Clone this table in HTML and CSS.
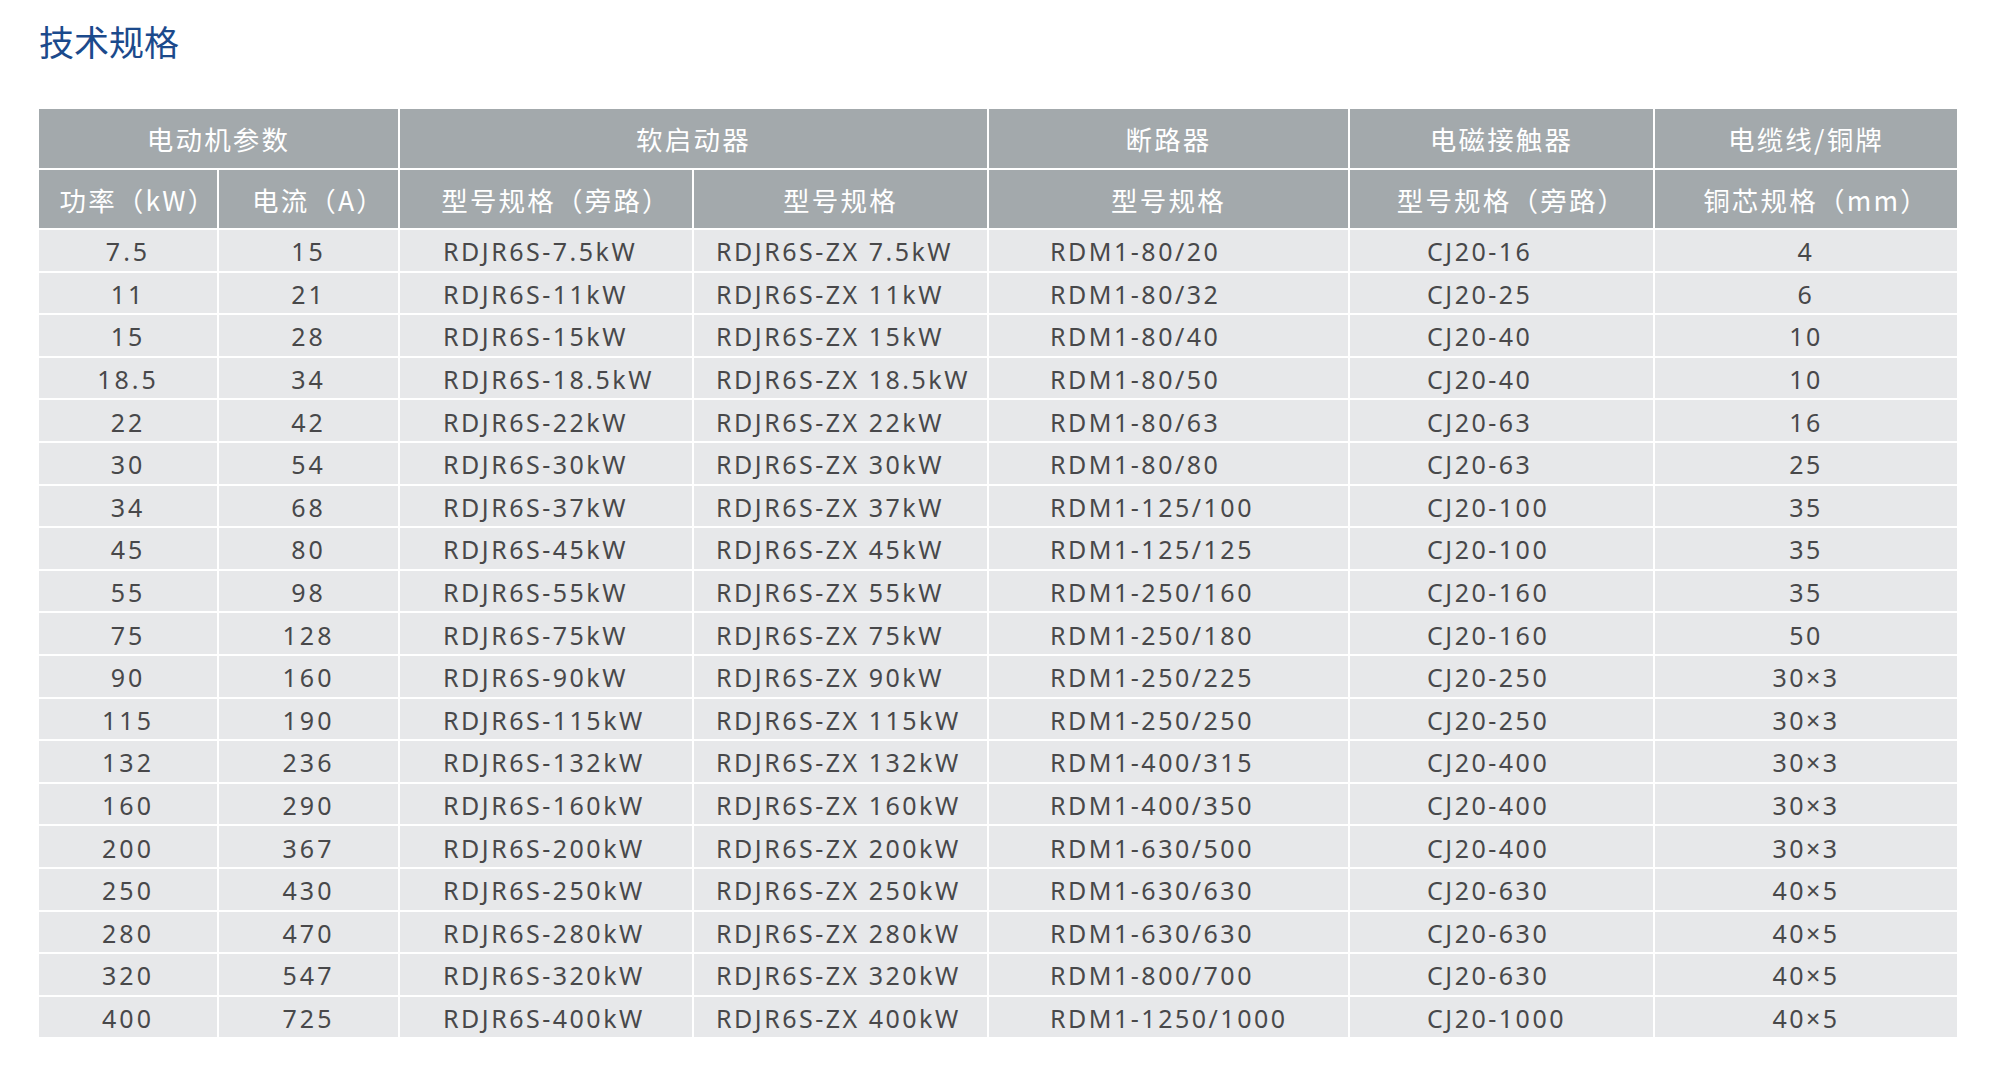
FILE: index.html
```html
<!DOCTYPE html>
<html lang="zh-CN">
<head>
<meta charset="utf-8">
<title>技术规格</title>
<link rel="stylesheet" href="styles.css">
</head>
<body>
<main class="page">
  <h1 class="title">技术规格</h1>
  <div class="spec">
    <div class="h h1 span2">电动机参数</div>
    <div class="h h1 span2">软启动器</div>
    <div class="h h1">断路器</div>
    <div class="h h1">电磁接触器</div>
    <div class="h h1">电缆线/铜牌</div>

    <div class="h h2 paren">功率（kW）</div>
    <div class="h h2 paren">电流（A）</div>
    <div class="h h2 paren">型号规格（旁路）</div>
    <div class="h h2">型号规格</div>
    <div class="h h2">型号规格</div>
    <div class="h h2 paren">型号规格（旁路）</div>
    <div class="h h2 paren">铜芯规格（mm）</div>
  </div>
</main>
<script src="app.js"></script>
</body>
</html>
```

FILE: app.js
```js
const data = [
  ["7.5","15","RDJR6S-7.5kW","RDJR6S-ZX 7.5kW","RDM1-80/20","CJ20-16","4"],
  ["11","21","RDJR6S-11kW","RDJR6S-ZX 11kW","RDM1-80/32","CJ20-25","6"],
  ["15","28","RDJR6S-15kW","RDJR6S-ZX 15kW","RDM1-80/40","CJ20-40","10"],
  ["18.5","34","RDJR6S-18.5kW","RDJR6S-ZX 18.5kW","RDM1-80/50","CJ20-40","10"],
  ["22","42","RDJR6S-22kW","RDJR6S-ZX 22kW","RDM1-80/63","CJ20-63","16"],
  ["30","54","RDJR6S-30kW","RDJR6S-ZX 30kW","RDM1-80/80","CJ20-63","25"],
  ["34","68","RDJR6S-37kW","RDJR6S-ZX 37kW","RDM1-125/100","CJ20-100","35"],
  ["45","80","RDJR6S-45kW","RDJR6S-ZX 45kW","RDM1-125/125","CJ20-100","35"],
  ["55","98","RDJR6S-55kW","RDJR6S-ZX 55kW","RDM1-250/160","CJ20-160","35"],
  ["75","128","RDJR6S-75kW","RDJR6S-ZX 75kW","RDM1-250/180","CJ20-160","50"],
  ["90","160","RDJR6S-90kW","RDJR6S-ZX 90kW","RDM1-250/225","CJ20-250","30×3"],
  ["115","190","RDJR6S-115kW","RDJR6S-ZX 115kW","RDM1-250/250","CJ20-250","30×3"],
  ["132","236","RDJR6S-132kW","RDJR6S-ZX 132kW","RDM1-400/315","CJ20-400","30×3"],
  ["160","290","RDJR6S-160kW","RDJR6S-ZX 160kW","RDM1-400/350","CJ20-400","30×3"],
  ["200","367","RDJR6S-200kW","RDJR6S-ZX 200kW","RDM1-630/500","CJ20-400","30×3"],
  ["250","430","RDJR6S-250kW","RDJR6S-ZX 250kW","RDM1-630/630","CJ20-630","40×5"],
  ["280","470","RDJR6S-280kW","RDJR6S-ZX 280kW","RDM1-630/630","CJ20-630","40×5"],
  ["320","547","RDJR6S-320kW","RDJR6S-ZX 320kW","RDM1-800/700","CJ20-630","40×5"],
  ["400","725","RDJR6S-400kW","RDJR6S-ZX 400kW","RDM1-1250/1000","CJ20-1000","40×5"]
];
const grid = document.querySelector('.spec');
data.forEach(row => {
  row.forEach((v, i) => {
    const d = document.createElement('div');
    d.className = 'c c' + (i + 1);
    d.textContent = v;
    grid.appendChild(d);
  });
});
```

FILE: styles.css
```css
html, body {
  margin: 0;
  padding: 0;
  background: #ffffff;
}

.page {
  padding: 22px 0 0 39px;
  font-family: "Noto Sans", "Noto Sans CJK SC", sans-serif;
}

.title {
  margin: 0;
  font-family: "Noto Sans CJK SC", sans-serif;
  font-weight: 400;
  font-size: 35px;
  line-height: 38px;
  color: #1b4a8c;
  letter-spacing: 0;
}

.spec {
  margin-top: 49px;
  width: 1918px;
  display: grid;
  grid-template-columns: 178px 179px 292px 293px 359px 303px 302px;
  grid-template-rows: 59px 58px repeat(19, 40.6px);
  gap: 2px;
}

.h {
  background: #a3a9ac;
  color: #ffffff;
  font-family: "Noto Sans CJK SC", sans-serif;
  font-weight: 400;
  font-size: 26.5px;
  letter-spacing: 2.2px;
  display: flex;
  align-items: center;
  justify-content: center;
}

.paren {
  padding-left: 20px;
}

.span2 {
  grid-column: span 2;
}

.c {
  background: #e7e8ea;
  color: #48484a;
  font-family: "Noto Sans", sans-serif;
  font-size: 25px;
  letter-spacing: 2.5px;
  display: flex;
  align-items: center;
  justify-content: center;
  padding-top: 2px;
  box-sizing: border-box;
  white-space: nowrap;
}

.c1, .c2 {
  letter-spacing: 3px;
}

.c3 {
  justify-content: flex-start;
  padding-left: 43px;
}

.c4 {
  justify-content: flex-start;
  padding-left: 22px;
}

.c5 {
  justify-content: flex-start;
  padding-left: 61px;
}

.c6 {
  justify-content: flex-start;
  padding-left: 77px;
}
```
